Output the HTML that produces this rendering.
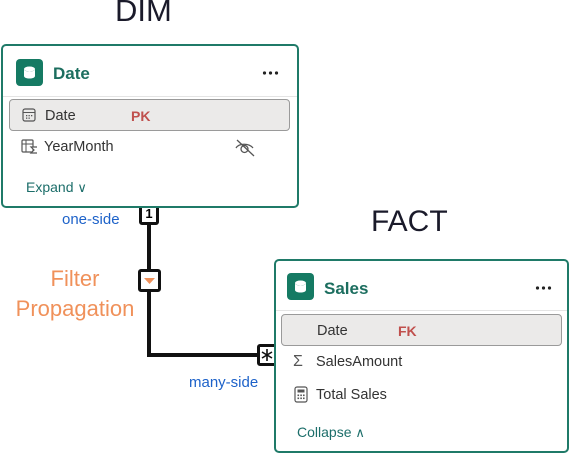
<!DOCTYPE html>
<html><head><meta charset="utf-8"><style>
*{margin:0;padding:0;box-sizing:border-box}
body{width:571px;height:454px;background:#fff;position:relative;overflow:hidden;font-family:"Liberation Sans",sans-serif}
.abs{position:absolute}
.card{position:absolute;border:2px solid #1f7a68;border-radius:5px;background:#fff}
.ico{position:absolute;width:27px;height:27px;background:#157a63;border-radius:4px}
.title{position:absolute;font-weight:bold;color:#1c6e5f;font-size:17px}
.dots{position:absolute}
.sep{position:absolute;height:1px;background:#e4e4e4}
.hl{position:absolute;background:#ebeae9;border:1px solid #9a9a9a;border-radius:4px}
.t{position:absolute;font-size:14.5px;color:#333}
.k{position:absolute;font-size:14px;font-weight:bold;color:#c0504d}
.lnk{position:absolute;font-size:14px;color:#1c6e6a}
.blue{position:absolute;font-size:15px;color:#1d62c9}
.or{position:absolute;font-size:22px;color:#f0915a;text-align:center;line-height:30px}
.box{position:absolute;border:3px solid #111;border-radius:3px;background:#fff}
</style></head><body>
<div class="abs" style="left:115px;top:-7px;font-size:31px;color:#1a1a2a">DIM</div>
<div class="abs" style="left:371px;top:205px;font-size:30px;color:#1a1a2a">FACT</div>

<div class="abs" style="left:147px;top:207px;width:4px;height:150px;background:#111"></div>
<div class="abs" style="left:147px;top:353px;width:115px;height:4px;background:#111"></div>
<div class="box" style="left:139px;top:204px;width:20px;height:21px;font-size:13px;line-height:14px;text-align:center;font-weight:bold">1</div>
<div class="box" style="left:138px;top:269px;width:23px;height:23px"><svg width="17" height="17" style="position:absolute;left:0;top:0"><polygon points="3,6 14,6 8.5,12" fill="#f0915a"/></svg></div>
<div class="box" style="left:257px;top:344px;width:20px;height:22px"><svg width="14" height="16" style="position:absolute;left:0;top:0"><g stroke="#111" stroke-width="1.6"><line x1="7" y1="2" x2="7" y2="14"/><line x1="2" y1="5" x2="12" y2="11"/><line x1="2" y1="11" x2="12" y2="5"/></g></svg></div>

<div class="blue" style="left:62px;top:211px">one-side</div>
<div class="blue" style="left:189px;top:374px">many-side</div>
<div class="or" style="left:5px;top:264px;width:140px">Filter<br>Propagation</div>

<div class="card" style="left:1px;top:44px;width:298px;height:164px">
 <div class="ico" style="left:13px;top:13px"><svg width="27" height="27"><ellipse cx="13.5" cy="10" rx="5.5" ry="2.5" fill="#fff"/><path d="M8 10v7c0 1.5 2.5 2.5 5.5 2.5s5.5-1 5.5-2.5v-7c0 1.5-2.5 2.5-5.5 2.5S8 11.5 8 10z" fill="#fff"/></svg></div>
 <div class="title" style="left:50px;top:18px">Date</div>
 <svg class="dots" style="left:259px;top:24px" width="18" height="6"><circle cx="2.5" cy="3" r="1.6" fill="#222"/><circle cx="8.5" cy="3" r="1.6" fill="#222"/><circle cx="14.5" cy="3" r="1.6" fill="#222"/></svg>
 <div class="sep" style="left:0;top:50px;width:294px"></div>
 <div class="hl" style="left:6px;top:53px;width:281px;height:32px"></div>
 <svg class="abs" style="left:19px;top:62px" width="14" height="14"><rect x="1" y="1" width="12" height="12" rx="2" fill="none" stroke="#555" stroke-width="1.2"/><line x1="1" y1="4.5" x2="13" y2="4.5" stroke="#555"/><g fill="#555"><rect x="4" y="7" width="1.3" height="1.3"/><rect x="6.5" y="7" width="1.3" height="1.3"/><rect x="9" y="7" width="1.3" height="1.3"/><rect x="4" y="9.5" width="1.3" height="1.3"/><rect x="6.5" y="9.5" width="1.3" height="1.3"/></g></svg>
 <div class="t" style="left:42px;top:62px">Date</div>
 <div class="k" style="left:128px;top:62px">PK</div>
 <svg class="abs" style="left:18px;top:93px" width="18" height="16"><rect x="1" y="1" width="11" height="12" rx="1" fill="none" stroke="#555" stroke-width="1.2"/><line x1="1" y1="5" x2="12" y2="5" stroke="#555"/><line x1="5" y1="1" x2="5" y2="13" stroke="#555"/><path d="M16 8h-6l3 3-3 3h6" fill="#fff" stroke="#555" stroke-width="1.2"/></svg>
 <div class="t" style="left:41px;top:93px">YearMonth</div>
 <svg class="abs" style="left:231px;top:93px" width="22" height="18"><path d="M2 9c3-5 13-5 17 0" fill="none" stroke="#555" stroke-width="1.3"/><circle cx="10.5" cy="10" r="3.5" fill="none" stroke="#555" stroke-width="1.3"/><line x1="3" y1="1" x2="20" y2="17" stroke="#555" stroke-width="1.3"/></svg>
 <div class="lnk" style="left:23px;top:133px">Expand <span style="font-size:13px">&#x2228;</span></div>
</div>

<div class="card" style="left:274px;top:259px;width:295px;height:194px">
 <div class="ico" style="left:11px;top:12px"><svg width="27" height="27"><ellipse cx="13.5" cy="10" rx="5.5" ry="2.5" fill="#fff"/><path d="M8 10v7c0 1.5 2.5 2.5 5.5 2.5s5.5-1 5.5-2.5v-7c0 1.5-2.5 2.5-5.5 2.5S8 11.5 8 10z" fill="#fff"/></svg></div>
 <div class="title" style="left:48px;top:18px">Sales</div>
 <svg class="dots" style="left:259px;top:24px" width="18" height="6"><circle cx="2.5" cy="3" r="1.6" fill="#222"/><circle cx="8.5" cy="3" r="1.6" fill="#222"/><circle cx="14.5" cy="3" r="1.6" fill="#222"/></svg>
 <div class="sep" style="left:0;top:49px;width:291px"></div>
 <div class="hl" style="left:5px;top:53px;width:281px;height:32px"></div>
 <div class="t" style="left:41px;top:62px">Date</div>
 <div class="k" style="left:122px;top:62px">FK</div>
 <div class="t" style="left:17px;top:92px;font-size:16px;color:#555">&Sigma;</div>
 <div class="t" style="left:40px;top:93px">SalesAmount</div>
 <svg class="abs" style="left:18px;top:125px" width="14" height="17"><rect x="1" y="1" width="12" height="15" rx="2" fill="none" stroke="#555" stroke-width="1.2"/><rect x="3.5" y="3.5" width="7" height="3" fill="#555"/><g fill="#555"><rect x="3.5" y="8.5" width="1.6" height="1.6"/><rect x="6.3" y="8.5" width="1.6" height="1.6"/><rect x="9" y="8.5" width="1.6" height="1.6"/><rect x="3.5" y="11.5" width="1.6" height="1.6"/><rect x="6.3" y="11.5" width="1.6" height="1.6"/><rect x="9" y="11.5" width="1.6" height="1.6"/></g></svg>
 <div class="t" style="left:40px;top:126px">Total Sales</div>
 <div class="lnk" style="left:21px;top:163px">Collapse <span style="font-size:13px">&#x2227;</span></div>
</div>
</body></html>
